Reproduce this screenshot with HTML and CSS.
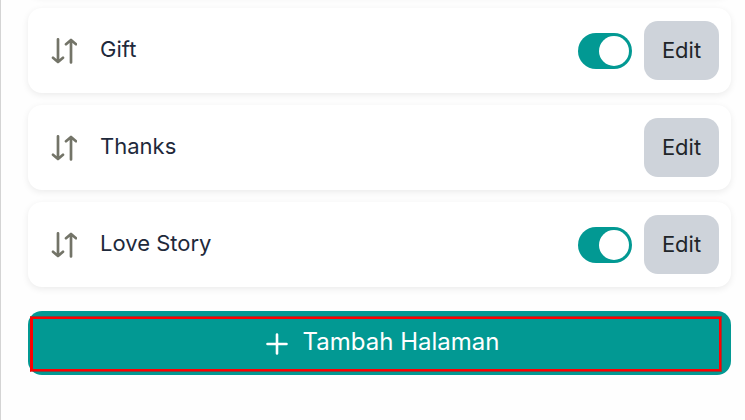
FILE: index.html
```html
<!DOCTYPE html>
<html lang="id">
<head>
<meta charset="utf-8">
<meta name="viewport" content="width=device-width, initial-scale=1">
<title>Halaman</title>
<link rel="stylesheet" href="styles.css">
</head>
<body>
<main class="panel">
  <ul class="list">
    <li class="card card-scrolled" aria-hidden="true"></li>
    <li class="card">
      <svg class="sort" viewBox="0 0 26 26" aria-hidden="true"><path d="M7 1.3V24M2 19.8L7 24L12 19.8M20 24.5V2M15 6.2L20 2L25 6.2"/></svg>
      <label class="name" for="gift">Gift</label>
      <input class="toggle" type="checkbox" role="switch" id="gift" checked>
      <button class="edit" type="button">Edit</button>
    </li>
    <li class="card">
      <svg class="sort" viewBox="0 0 26 26" aria-hidden="true"><path d="M7 1.3V24M2 19.8L7 24L12 19.8M20 24.5V2M15 6.2L20 2L25 6.2"/></svg>
      <span class="name">Thanks</span>
      <button class="edit" type="button">Edit</button>
    </li>
    <li class="card">
      <svg class="sort" viewBox="0 0 26 26" aria-hidden="true"><path d="M7 1.3V24M2 19.8L7 24L12 19.8M20 24.5V2M15 6.2L20 2L25 6.2"/></svg>
      <label class="name" for="story">Love Story</label>
      <input class="toggle" type="checkbox" role="switch" id="story" checked>
      <button class="edit" type="button">Edit</button>
    </li>
  </ul>
  <div class="action">
    <button class="add" type="button">
      <svg class="plus" viewBox="0 0 22 22" aria-hidden="true"><path d="M11 1.5V20.5M1.5 11H20.5"/></svg>
      <span>Tambah Halaman</span>
    </button>
    <div class="marker"></div>
  </div>
</main>
</body>
</html>
```
FILE: styles.css
```css
* {
  box-sizing: border-box;
}

body {
  margin: 0;
  background: #fefefe;
  font-family: Inter, "Liberation Sans", sans-serif;
  font-size: 22px;
  color: #1e293b;
}

.panel {
  min-height: 100vh;
  padding: 0 14px 24px 27px;
  border-left: 1px solid #d4d4d4;
  overflow: hidden;
}

.list {
  display: flex;
  flex-direction: column;
  gap: 12px;
  margin: 0;
  padding: 0;
  list-style: none;
}

.card {
  display: flex;
  align-items: center;
  min-height: 85px;
  padding: 12px 12px 12px 23px;
  border-radius: 14px;
  background: #fff;
  box-shadow: 0 2px 7px rgba(0, 0, 0, 0.08);
}

.card-scrolled {
  margin-top: -89px;
}

.sort {
  width: 26px;
  height: 26px;
  margin-right: 23px;
  fill: none;
  stroke: #737468;
  stroke-width: 2.7;
  stroke-linecap: round;
  stroke-linejoin: round;
}

.name {
  flex: 1;
  line-height: 28px;
  padding-bottom: 4px;
}

.toggle {
  appearance: none;
  width: 54px;
  height: 36px;
  margin: 0 12px 0 0;
  padding: 3px;
  border-radius: 18px;
  background: #e2e8f0;
}

.toggle::before {
  content: "";
  display: block;
  width: 30px;
  height: 30px;
  border-radius: 50%;
  background: #fff;
}

.toggle:checked {
  background: #029993;
}

.toggle:checked::before {
  margin-left: auto;
}

.edit {
  width: 75px;
  height: 59px;
  padding: 0 0 2px;
  border: 0;
  border-radius: 14px;
  background: #ced3da;
  color: #212529;
  font: inherit;
}

.action {
  position: relative;
  margin-top: 24px;
}

.add {
  display: flex;
  align-items: center;
  justify-content: center;
  gap: 15px;
  width: 100%;
  height: 64px;
  padding: 0 0 4px 6px;
  border: 0;
  border-radius: 14px;
  background: #029993;
  color: #fff;
  font: inherit;
  font-size: 24px;
}

.plus {
  width: 22px;
  height: 22px;
  margin-top: 6px;
  fill: none;
  stroke: #fff;
  stroke-width: 2.6;
  stroke-linecap: round;
}

.marker {
  position: absolute;
  inset: 5px 9px 3px 2px;
  border: 1px solid rgba(200, 20, 20, 0.65);
  border-left-color: #f00;
  box-shadow: inset 0 0 0 2px #f00;
  pointer-events: none;
}
```
